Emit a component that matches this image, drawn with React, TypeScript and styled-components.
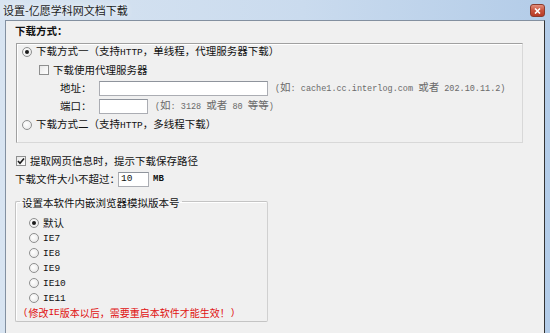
import styled, { createGlobalStyle } from "styled-components";

const GlobalStyle = createGlobalStyle`
  html, body {
    margin: 0;
    padding: 0;
    background: #f0f0f0;
  }
  body {
    font-family: "Noto Sans CJK SC", "Noto Sans", sans-serif;
    font-size: 10.5px;
    line-height: 14px;
    color: #111;
  }
`;

const Window = styled.div`
  width: 550px;
  height: 333px;
  display: flex;
  flex-direction: column;
  overflow: hidden;
  background: linear-gradient(to right, #d8e4f1 0%, #cadbee 55%, #b3cce8 100%);
`;

const TitleBar = styled.div`
  height: 20px;
  display: flex;
  align-items: center;
  justify-content: space-between;
  padding: 0 5px 0 3px;
  flex-shrink: 0;
`;

const Title = styled.span`
  font-size: 11px;
  color: #1c1c1c;
  text-shadow: 0 0 6px rgba(255, 255, 255, 0.95);
`;

const CloseButton = styled.div`
  width: 15px;
  height: 13px;
  margin-top: 1px;
  box-sizing: border-box;
  display: flex;
  align-items: center;
  justify-content: center;
  border: 1px solid #8b3b2d;
  border-radius: 3px;
  background: linear-gradient(#e3907f, #c8523c 50%, #b83a25);
`;

const Client = styled.div`
  flex: 1;
  margin: 0 5px;
  padding: 3px 21px 0 9px;
  background: #f0f0f0;
  border: 1px solid #8390a0;
  border-right-color: #333;
  border-bottom: none;
  display: flex;
  flex-direction: column;
  align-items: flex-start;
`;

const Heading = styled.div`
  font-weight: 700;
  height: 14px;
`;

const GroupBox = styled.div`
  align-self: stretch;
  margin: 5px 0 0 1px;
  padding: 0 0 9px;
  border: 1px solid;
  border-color: #a0a0a0 #d8d8d8 #d8d8d8 #a0a0a0;
  box-shadow: inset 1px 1px 0 #fff;
  display: flex;
  flex-direction: column;
`;

const Row = styled.div<{ $top?: number; $indent?: number; $height?: number }>`
  display: flex;
  align-items: center;
  height: ${(p) => p.$height ?? 16}px;
  margin-top: ${(p) => p.$top ?? 0}px;
  padding-left: ${(p) => p.$indent ?? 0}px;
  white-space: nowrap;
`;

const RadioMark = styled.span<{ $checked?: boolean }>`
  width: 10px;
  height: 10px;
  box-sizing: border-box;
  border-radius: 50%;
  border: 1px solid #8e8f8f;
  background: radial-gradient(circle at 40% 40%, #fff, #e4e4e4);
  margin-right: 4px;
  flex-shrink: 0;
  display: flex;
  align-items: center;
  justify-content: center;

  &::after {
    content: "";
    width: 4px;
    height: 4px;
    border-radius: 50%;
    background: ${(p) => (p.$checked ? "#1a1a1a" : "transparent")};
  }
`;

const CheckBox = styled.span`
  width: 10px;
  height: 10px;
  box-sizing: border-box;
  border: 1px solid #8e8f8f;
  background: linear-gradient(135deg, #e8e8e8, #fff);
  margin-right: 4px;
  flex-shrink: 0;
  display: flex;
  align-items: center;
  justify-content: center;
`;

const Label = styled.span<{ $width?: number }>`
  display: inline-block;
  width: ${(p) => (p.$width ? `${p.$width}px` : "auto")};
`;

const TextField = styled.div<{ $width: number }>`
  width: ${(p) => p.$width}px;
  height: 15px;
  box-sizing: border-box;
  background: #fff;
  border: 1px solid #abadb3;
  border-top-color: #8f949c;
  padding-left: 2px;
  display: flex;
  align-items: center;
`;

const Hint = styled.span`
  margin-left: 7px;
  color: #6a6a6a;
`;

const Latin = styled.span<{ $size?: number }>`
  font-family: "Liberation Mono", monospace;
  font-size: ${(p) => p.$size ?? 8.5}px;
`;

const Unit = styled.span`
  margin-left: 4px;
  font-family: "Liberation Mono", monospace;
  font-size: 9px;
  font-weight: 700;
`;

const Fieldset = styled.fieldset`
  width: 253px;
  box-sizing: border-box;
  margin: 5px 0 0;
  padding: 0 0 1px;
  min-width: 0;
  border: 1px solid;
  border-color: #c4c4c4 #d0d0d0 #c4c4c4 #c4c4c4;
  border-radius: 2px;
  box-shadow: inset 1px 1px 0 #fff;
  display: flex;
  flex-direction: column;
`;

const Legend = styled.legend`
  margin-left: 4px;
  padding: 4px 2px 0;
  line-height: 14px;
`;

const Warning = styled(Row)`
  color: #e01010;
  font-size: 10px;
`;

function Radio({ checked, children }: { checked?: boolean; children: React.ReactNode }) {
  return (
    <>
      <RadioMark $checked={checked} />
      <span>{children}</span>
    </>
  );
}

function Check({ checked, children }: { checked?: boolean; children: React.ReactNode }) {
  return (
    <>
      <CheckBox>
        {checked && (
          <svg width="8" height="8" viewBox="0 0 8 8">
            <path d="M1 4 L3 6.2 L7 1.5" fill="none" stroke="#1a1a1a" strokeWidth="1.6" />
          </svg>
        )}
      </CheckBox>
      <span>{children}</span>
    </>
  );
}

const ieVersions = ["IE7", "IE8", "IE9", "IE10", "IE11"];

export default function App() {
  return (
    <>
      <GlobalStyle />
      <Window>
        <TitleBar>
          <Title>设置-亿愿学科网文档下载</Title>
          <CloseButton>
            <svg width="7" height="6" viewBox="0 0 7 6">
              <path d="M1 0.5 L6 5.5 M6 0.5 L1 5.5" stroke="#fff" strokeWidth="1.6" />
            </svg>
          </CloseButton>
        </TitleBar>
        <Client>
          <Heading>下载方式：</Heading>
          <GroupBox>
            <Row $indent={5}>
              <Radio checked>
                下载方式一（支持<Latin $size={9.5}>HTTP</Latin>，单线程，代理服务器下载）
              </Radio>
            </Row>
            <Row $top={2} $indent={22}>
              <Check>下载使用代理服务器</Check>
            </Row>
            <Row $top={2} $indent={43}>
              <Label $width={39}>地址：</Label>
              <TextField $width={169} />
              <Hint>
                <Latin>(</Latin>如<Latin>: cache1.cc.interlog.com </Latin>或者
                <Latin> 202.10.11.2)</Latin>
              </Hint>
            </Row>
            <Row $top={2} $indent={43}>
              <Label $width={39}>端口：</Label>
              <TextField $width={49} />
              <Hint>
                <Latin>(</Latin>如<Latin>: 3128 </Latin>或者<Latin> 80 </Latin>等等<Latin>)</Latin>
              </Hint>
            </Row>
            <Row $top={3} $indent={5}>
              <Radio>
                下载方式二（支持<Latin $size={9.5}>HTTP</Latin>，多线程下载）
              </Radio>
            </Row>
          </GroupBox>
          <Row $top={10} $indent={1}>
            <Check checked>提取网页信息时，提示下载保存路径</Check>
          </Row>
          <Row $top={2}>
            <Label $width={103}>下载文件大小不超过：</Label>
            <TextField $width={31}>
              <Latin $size={9.5}>10</Latin>
            </TextField>
            <Unit>MB</Unit>
          </Row>
          <Fieldset>
            <Legend>设置本软件内嵌浏览器模拟版本号</Legend>
            <Row $top={5} $indent={13} $height={15}>
              <Radio checked>默认</Radio>
            </Row>
            {ieVersions.map((v) => (
              <Row key={v} $indent={13} $height={15}>
                <Radio>
                  <Latin $size={9.5}>{v}</Latin>
                </Radio>
              </Row>
            ))}
            <Warning $top={1} $indent={7} $height={14}>
              <Latin $size={9}>(</Latin>修改<Latin $size={9.5}>IE</Latin>版本以后，需要重启本软件才能生效！
              <Latin $size={9}>)</Latin>
            </Warning>
          </Fieldset>
        </Client>
      </Window>
    </>
  );
}
